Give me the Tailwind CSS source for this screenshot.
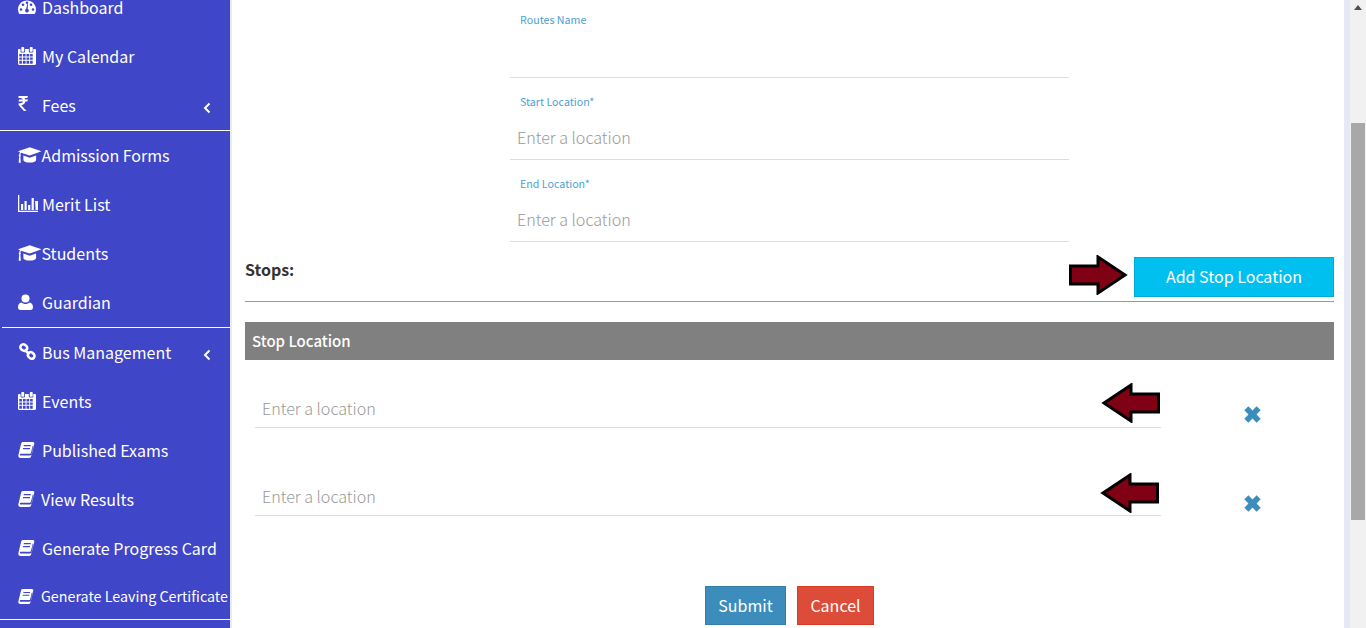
<!DOCTYPE html>
<html lang="en"><head><meta charset="utf-8"><title>Routes</title>
<script src="https://cdn.jsdelivr.net/npm/@tailwindcss/browser@4"></script></head>
<body class="h-[628px] w-[1366px] overflow-hidden bg-white font-['Noto_Sans_CJK_SC','Source_Sans_Pro',sans-serif] text-[#333]">
<svg class="hidden">
<defs>
<symbol id="i-dash" viewBox="0 0 18 18"><path fill="currentColor" fill-rule="evenodd" d="M9 2.500C4 2.500 0 6.400 0 11.400c0 1.600.4 3 1.200 4.300.2.3.4.3.7.3h14.200c.3 0 .5 0 .7-.3.8-1.300 1.200-2.700 1.200-4.300 0-5-4-8.900-9-8.900zM3 12.800a1.300 1.300 0 1 1 0-2.600 1.300 1.300 0 0 1 0 2.600zM5 8a1.300 1.300 0 1 1 0-2.600A1.300 1.300 0 0 1 5 8zm4-2a1.300 1.300 0 1 1 0-2.600A1.300 1.300 0 0 1 9 6zm4 2a1.300 1.300 0 1 1 0-2.600A1.300 1.300 0 0 1 13 8zm2 4.800a1.300 1.300 0 1 1 0-2.600 1.300 1.300 0 0 1 0 2.600zM9 14.600a2 2 0 0 1-.8-3.800l1-4.600c.1-.3.8-.2.8.2l-.3 4.400A2 2 0 0 1 9 14.600z"/></symbol>
<symbol id="i-cal" viewBox="0 0 18 18"><path fill="currentColor" fill-rule="evenodd" d="M4 0h1.500c.4 0 .7.3.7.7V4c0 .4-.3.7-.7.7H4c-.4 0-.7-.3-.7-.7V.7C3.300.3 3.600 0 4 0zm8.500 0H14c.4 0 .7.3.7.700V4c0 .4-.3.7-.7.7h-1.500c-.4 0-.7-.3-.7-.7V.7c0-.4.3-.7.7-.7zM1.200 2h1.300v2.200c0 .8.7 1.300 1.400 1.300h1.700c.8 0 1.400-.6 1.400-1.300V2h3.800v2.200c0 .8.700 1.300 1.400 1.300h1.700c.8 0 1.400-.6 1.400-1.300V2h1.400C17.500 2 18 2.500 18 3.200v13.600c0 .7-.5 1.200-1.200 1.200H1.200C.500 18 0 17.500 0 16.800V3.200C0 2.500.500 2 1.200 2zM1.300 7v2.400h2.600V7zm3.600 0v2.400h2.700V7zm3.600 0v2.400h2.700V7zm3.600 0v2.400h2.600V7zM1.300 10.400v2.400h2.600v-2.400zm3.600 0v2.400h2.700v-2.400zm3.600 0v2.400h2.700v-2.400zm3.600 0v2.400h2.600v-2.400zM1.300 13.800v2.900h2.600v-2.900zm3.600 0v2.900h2.700v-2.900zm3.600 0v2.900h2.700v-2.900zm3.600 0v2.900h2.600v-2.900z"/></symbol>
<symbol id="i-cap" viewBox="0 0 24 18"><path fill="currentColor" d="M12 1 0 5.200l2 .9c-.4.700-.6 1.500-.7 2.300-.4.200-.6.600-.6 1 0 .4.200.7.500.9L.700 17h2.200l-.500-6.600c.3-.2.500-.500.500-.9 0-.4-.2-.7-.5-.9.100-.8.300-1.500.7-2L12 9.500l12-4.300zM5.500 9.500v4.500c0 1.300 2.900 2.700 6.500 2.700s6.500-1.400 6.500-2.700V9.500L12 11.800z"/></symbol>
<symbol id="i-chart" viewBox="0 0 20 18"><path fill="currentColor" d="M0 0h1.300v15.700H20V17H0zM3 9h2.200v6H3zm3.500-3h2.200v9H6.500zm3.600 4h2.200v5h-2.200zm3.500-7h2.200v12h-2.200zm3.500 3H20v9h-2.400z"/></symbol>
<symbol id="i-user" viewBox="0 0 16 18"><path fill="currentColor" d="M8 1a4.300 4.300 0 1 1 0 8.600A4.300 4.300 0 0 1 8 1zM3.800 9.400C5 10.400 6.400 11 8 11s3-.6 4.200-1.600c2.500.2 3.800 2.500 3.800 5.300 0 1.600-1 2.800-2.500 2.800h-11C1 17.500 0 16.300 0 14.700c0-2.800 1.300-5.100 3.800-5.300z"/></symbol>
<symbol id="i-link" viewBox="0 0 18 18"><path fill="none" stroke="currentColor" stroke-width="2.500" d="M3.900 1.700a2.900 2.900 0 0 1 2.900 0l1.400 1.100a2.800 2.800 0 0 1 .3 4.100 2.800 2.800 0 0 1-4.100.3L3 6a2.800 2.800 0 0 1 .9-4.300zM10.900 9.700a2.900 2.900 0 0 1 3.500 0l1.300 1.300a2.800 2.800 0 0 1 0 4 2.800 2.800 0 0 1-4 0L10.400 13.700a2.800 2.800 0 0 1 .5-4zM6.500 6.500l5 5"/></symbol>
<symbol id="i-book" viewBox="0 1 17 16.500"><path fill="currentColor" fill-rule="evenodd" d="M5 1h10c1 0 1.800.8 1.500 1.800L14 13.500c-.2 1-.9 1.500-1.900 1.500H2.500c-.7 0-1-.6-.8-1.100.2-.6.8-.7 1.400-.7h8.700c.7 0 1.100-.3 1.300-1L15 4.500c.4.200.6.600.5 1.100L13.200 16c-.2 1-1 1.500-2 1.500H2.100C.8 17.500-.3 16.100 .1 14.700L3 2.600C3.300 1.600 4 1 5 1zm.8 3.200-.3 1.200h7.300l.3-1.200zM5 7.200l-.3 1.200H12l.3-1.200z"/></symbol>
<symbol id="i-rupee" viewBox="0 0 10 15"><path fill="currentColor" d="M.5 0H10L9.300 2H6.600c.4.400.7 1 .8 1.600H10l-.7 2H7.400C7 7.800 5.400 9 3.300 9.300L8.500 15H5.900L.6 9V7.300h1.500c1.500 0 2.700-.5 3-1.700H.5l.6-2h3.800C4.500 2.600 3.500 2 2.100 2H.5z"/></symbol>
<symbol id="i-arrow" viewBox="0 0 60 40"><path fill="#800014" stroke="#000" stroke-width="3" d="M2.500 11H30V2L57 20 30 38V29H2.500z"/></symbol>
<symbol id="i-x" viewBox="1 1 16 16"><path fill="#3c8dbc" d="M1.300 5.100 5.100 1.300 9 5.200l3.900-3.900 3.800 3.800L12.800 9l3.900 3.900-3.800 3.800L9 12.800l-3.900 3.900-3.800-3.800L5.200 9z"/></symbol>
</defs>
</svg>
<div class="flex h-[628px]">
  <!-- sidebar -->
  <aside class="w-[230px] shrink-0 overflow-hidden bg-[#3f46c8] text-white">
    <nav class="-mt-[17px] whitespace-nowrap text-[16px] leading-[24px]">
      <a class="flex h-[49px] items-center pb-[2px] pl-[18px]"><svg class="h-[18px] w-[18px] mr-[6px]"><use href="#i-dash"/></svg>Dashboard</a>
      <a class="flex h-[49px] items-center pb-[2px] pl-[18px]"><svg class="h-[18px] w-[18px] mr-[6px]"><use href="#i-cal"/></svg>My Calendar</a>
      <a class="flex h-[49px] items-center pb-[2px] pl-[18px] pr-[19px]"><svg class="-mt-[3px] h-[15px] w-[10px] mr-[14px]"><use href="#i-rupee"/></svg>Fees<svg class="ml-auto mt-[7px] h-[12px] w-[8px]" viewBox="0 0 8 12"><path d="M6.500 1.500 2 6l4.500 4.500" fill="none" stroke="currentColor" stroke-width="2"/></svg></a>
      <div class="h-px bg-white"></div>
      <a class="flex h-[49px] items-center pb-[2px] pl-[18px]"><svg class="h-[18px] w-[23.500px]"><use href="#i-cap"/></svg>Admission Forms</a>
      <a class="flex h-[49px] items-center pb-[2px] pl-[18px]"><svg class="h-[18px] w-[20px] mr-[4px]"><use href="#i-chart"/></svg>Merit List</a>
      <a class="flex h-[49px] items-center pb-[2px] pl-[18px]"><svg class="h-[18px] w-[23.500px]"><use href="#i-cap"/></svg>Students</a>
      <a class="flex h-[49px] items-center pb-[2px] pl-[18px]"><svg class="h-[18px] w-[15px] mr-[9px]"><use href="#i-user"/></svg>Guardian</a>
      <div class="ml-[2px] h-px bg-white"></div>
      <a class="flex h-[49px] items-center pb-[2px] pl-[18px] pr-[19px]"><svg class="h-[18px] w-[18px] mr-[6px]"><use href="#i-link"/></svg>Bus Management<svg class="ml-auto mt-[7px] h-[12px] w-[8px]" viewBox="0 0 8 12"><path d="M6.500 1.500 2 6l4.500 4.500" fill="none" stroke="currentColor" stroke-width="2"/></svg></a>
      <a class="flex h-[49px] items-center pb-[2px] pl-[18px]"><svg class="h-[18px] w-[18px] mr-[6px]"><use href="#i-cal"/></svg>Events</a>
      <a class="flex h-[49px] items-center pb-[2px] pl-[18px]"><svg class="h-[16px] w-[17px] mr-[7px]"><use href="#i-book"/></svg>Published Exams</a>
      <a class="flex h-[49px] items-center pb-[2px] pl-[18px]"><svg class="h-[16px] w-[17px] mr-[6px]"><use href="#i-book"/></svg>View Results</a>
      <a class="flex h-[49px] items-center pb-[2px] pl-[18px]"><svg class="h-[16px] w-[17px] mr-[7px]"><use href="#i-book"/></svg>Generate Progress Card</a>
      <a class="flex h-[46px] items-center pl-[18px] text-[14.300px]"><svg class="h-[15px] w-[16px] mr-[7px]"><use href="#i-book"/></svg>Generate Leaving Certificate</a>
      <div class="h-px bg-white"></div>
    </nav>
  </aside>
  <div class="w-[2px] shrink-0 bg-[#e9ebf5]"></div>
  <!-- main -->
  <main class="relative w-[1112px] shrink-0 bg-white pl-[13px] pr-[10px]">
    <div class="ml-[265px] w-[559px] pt-[12px]">
      <div class="h-[66px] border-b border-[#dddddd]">
        <label class="block pl-[10px] text-[10.700px] leading-[16px] text-[#4a9fd4]">Routes Name</label>
      </div>
      <div class="mt-[16px] h-[66px] border-b border-[#dddddd]">
        <label class="block pl-[10px] text-[10.700px] leading-[16px] text-[#4a9fd4]">Start Location*</label>
        <div class="mt-[15px] pl-[7px] text-[16.100px] font-light leading-[24px] text-[#999]">Enter a location</div>
      </div>
      <div class="mt-[16px] h-[66px] border-b border-[#dddddd]">
        <label class="block pl-[10px] text-[10.700px] leading-[16px] text-[#4a9fd4]">End Location*</label>
        <div class="mt-[15px] pl-[7px] text-[16.100px] font-light leading-[24px] text-[#999]">Enter a location</div>
      </div>
    </div>
    <div class="mt-[15px] flex h-[44px] items-start justify-between">
      <b class="text-[16px] leading-[24px] text-[#333]">Stops:</b>
      <button class="h-[40px] w-[200px] border border-[#00acd6] bg-[#00c0ef] pb-[2px] text-[16px] text-white">Add Stop Location</button>
    </div>
    <div class="h-px bg-[#999]"></div>
    <div class="mt-[20px] flex h-[38px] items-center bg-[#808080] px-[7px] text-[15px] font-medium text-white">Stop Location</div>
    <div class="mt-[29px] flex items-start">
      <div class="ml-[10px] h-[39px] w-[906px] border-b border-[#dddddd] pl-[7px] pt-[7px] text-[16.100px] font-light leading-[24px] text-[#999]">Enter a location</div>
      <svg class="ml-[83px] mt-[17px] h-[17px] w-[17px]"><use href="#i-x"/></svg>
    </div>
    <div class="mt-[50px] flex items-start">
      <div class="ml-[10px] h-[38px] w-[906px] border-b border-[#dddddd] pl-[7px] pt-[6px] text-[16.100px] font-light leading-[24px] text-[#999]">Enter a location</div>
      <svg class="ml-[83px] mt-[17px] h-[17px] w-[17px]"><use href="#i-x"/></svg>
    </div>
    <div class="ml-[460px] mt-[70px] flex gap-[11px]">
      <button class="h-[39px] w-[81px] border border-[#367fa9] bg-[#3c8dbc] pb-[2px] text-[16px] text-white">Submit</button>
      <button class="h-[39px] w-[77px] border border-[#d73925] bg-[#dd4b39] pb-[2px] text-[16px] text-white">Cancel</button>
    </div>
    <!-- annotation arrows -->
    <svg class="absolute left-[836px] top-[255px] h-[40px] w-[60px]"><use href="#i-arrow"/></svg>
    <svg class="absolute left-[869px] top-[383px] h-[40px] w-[60px] -scale-x-100"><use href="#i-arrow"/></svg>
    <svg class="absolute left-[868px] top-[473px] h-[40px] w-[60px] -scale-x-100"><use href="#i-arrow"/></svg>
  </main>
  <!-- page background strip -->
  <div class="w-[6px] shrink-0 bg-[#e4e9f5]"></div>
  <!-- scrollbar -->
  <div class="relative w-[16px] shrink-0 bg-[#f1f1f1]">
    <svg class="absolute left-[4px] top-[5px] h-[6px] w-[8px]" viewBox="0 0 8 6"><path d="M4 0 8 5H0z" fill="#505050"/></svg>
    <div class="absolute left-[1px] top-[123px] h-[397px] w-[14px] bg-[#a8a8a8]"></div>
  </div>
</div>
</body></html>
